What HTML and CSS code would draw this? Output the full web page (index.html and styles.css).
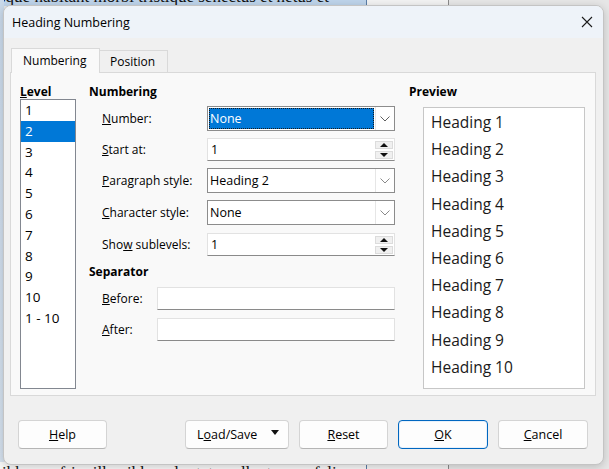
FILE: index.html
```html
<!DOCTYPE html>
<html>
<head>
<meta charset="utf-8">
<link rel="stylesheet" href="styles.css">
</head>
<body>
<div class="desktop">
  <div class="doc doc-top"><span class="doc-text">sque habitant morbi tristique senectus et netus et</span></div>
  <div class="doc doc-top-right"></div>
  <div class="doc doc-left"></div>
  <div class="doc doc-bottom"><span class="doc-text">ibh sem fringilla nibh, vulputate pellentesque felis</span></div>
  <div class="doc doc-bottom-right"></div>

  <div class="dialog">
    <div class="titlebar">
      <span class="title">Heading Numbering</span>
      <svg class="close" width="12" height="12" viewBox="0 0 12 12"><path d="M1 1 L11 11 M11 1 L1 11" stroke="#1c1c1c" stroke-width="1.1" fill="none"/></svg>
    </div>
    <div class="body">
      <div class="tabs">
        <div class="tab active">Numbering</div>
        <div class="tab">Position</div>
      </div>
      <div class="panel">
        <div class="col level-col">
          <div class="heading"><u>L</u>evel</div>
          <ul class="levels">
            <li>1</li><li class="sel">2</li><li>3</li><li>4</li><li>5</li><li>6</li><li>7</li><li>8</li><li>9</li><li>10</li><li>1 - 10</li>
          </ul>
        </div>
        <div class="col num-col">
          <div class="heading">Numbering</div>
          <div class="form">
            <div class="row r25"><label><u>N</u>umber:</label>
              <div class="combo focus"><span class="val"><span class="selbox">None</span></span><span class="drop"><svg width="10" height="6" viewBox="0 0 10 6"><path d="M0.5 0.5 L5 5 L9.5 0.5" stroke="#5f5f5f" fill="none"/></svg></span></div>
            </div>
            <div class="row r23"><label><u>S</u>tart at:</label>
              <div class="spin"><span class="val">1</span><span class="spinbtns"><span class="sb"><i class="up"></i></span><span class="sb"><i class="down"></i></span></span></div>
            </div>
            <div class="row r25"><label><u>P</u>aragraph style:</label>
              <div class="combo"><span class="val">Heading 2</span><span class="drop"><svg width="10" height="6" viewBox="0 0 10 6"><path d="M0.5 0.5 L5 5 L9.5 0.5" stroke="#8a8a8a" fill="none"/></svg></span></div>
            </div>
            <div class="row r25"><label><u>C</u>haracter style:</label>
              <div class="combo"><span class="val">None</span><span class="drop"><svg width="10" height="6" viewBox="0 0 10 6"><path d="M0.5 0.5 L5 5 L9.5 0.5" stroke="#8a8a8a" fill="none"/></svg></span></div>
            </div>
            <div class="row r23 gap8"><label>Sho<u>w</u> sublevels:</label>
              <div class="spin"><span class="val">1</span><span class="spinbtns"><span class="sb"><i class="up"></i></span><span class="sb"><i class="down"></i></span></span></div>
            </div>
          </div>
          <div class="heading sep">Separator</div>
          <div class="form sepform">
            <div class="row r23"><label class="short"><u>B</u>efore:</label><div class="entry"></div></div>
            <div class="row r23 gap8"><label class="short"><u>A</u>fter:</label><div class="entry"></div></div>
          </div>
        </div>
        <div class="col prev-col">
          <div class="heading">Preview</div>
          <div class="preview">
            <div>Heading 1</div><div>Heading 2</div><div>Heading 3</div><div>Heading 4</div><div>Heading 5</div>
            <div>Heading 6</div><div>Heading 7</div><div>Heading 8</div><div>Heading 9</div><div>Heading 10</div>
          </div>
        </div>
      </div>
      <div class="buttons">
        <button class="btn help"><u>H</u>elp</button>
        <div class="btn-group">
          <button class="btn loadsave">L<u>o</u>ad/Save <span class="caret"></span></button>
          <button class="btn reset"><u>R</u>eset</button>
          <button class="btn ok"><u>O</u>K</button>
          <button class="btn cancel"><u>C</u>ancel</button>
        </div>
      </div>
    </div>
  </div>
</div>
</body>
</html>
```
FILE: styles.css
```css
* { box-sizing: border-box; }
html, body { margin: 0; padding: 0; }
body {
  font-family: "Open Sans", "Noto Sans", sans-serif;
  font-size: 12px;
  color: #000;
  background: #e4e4e4;
}
.desktop {
  position: relative;
  width: 609px;
  height: 469px;
  overflow: hidden;
  background: #e6e6e6;
}
.doc { position: absolute; overflow: hidden; }
.doc-text {
  font-family: "Liberation Serif", serif;
  font-size: 17px;
  white-space: nowrap;
  color: #111;
}
.doc-top {
  left: 0; top: 0; width: 367px; height: 6px;
  background: #bdd3ea;
  border-right: 1px solid #5a7da6;
}
.doc-top .doc-text { position: absolute; left: -1px; top: -13px; }
.doc-top-right {
  left: 367px; top: 0; width: 82px; height: 6px;
  background: #f2f2f2;
  border-right: 1px solid #8a8a8a;
}
.doc-left {
  left: 0; top: 0; width: 4px; height: 469px;
  background: linear-gradient(#c9d9ea, #d5e1ee);
}
.doc-bottom {
  left: 0; top: 462px; width: 367px; height: 7px;
  background: #f7f7f7;
  border-right: 1px solid #5a7da6;
}
.doc-bottom .doc-text { position: absolute; left: 2px; top: 1px; }
.doc-bottom-right {
  left: 367px; top: 462px; width: 82px; height: 7px;
  background: #f2f2f2;
  border-right: 1px solid #8a8a8a;
}

.dialog {
  position: absolute;
  left: 3px; top: 5px;
  width: 601px; height: 460px;
  background: #f0f0f0;
  border: 1px solid #c4c4c4;
  border-radius: 8px;
  box-shadow: 0 2px 8px rgba(0,0,0,0.18);
  overflow: hidden;
  display: flex;
  flex-direction: column;
}
.titlebar {
  height: 32px;
  flex: none;
  background: #eef3f9;
  display: flex;
  align-items: center;
  justify-content: space-between;
  padding: 0 10px 0 8px;
}
.title { font-size: 12.5px; }
.close { margin-right: 0; }

.body {
  flex: 1;
  display: flex;
  flex-direction: column;
  padding: 10px 7px 0 6px;
}
.tabs { display: flex; align-items: flex-end; height: 24px; padding-left: 1px; }
.tab {
  height: 22px;
  padding: 0 10px;
  line-height: 21px;
  border: 1px solid #d9d9d9;
  border-bottom: none;
  background: #f0f0f0;
  margin-bottom: 0;
}
.tab.active {
  height: 25px;
  width: 89px;
  padding: 0 0 0 11px;
  line-height: 24px;
  background: #f9f9f9;
  position: relative;
  top: 1px;
  z-index: 1;
}
.tab + .tab { border-left: none; width: 68px; padding-left: 10px; }

.panel {
  height: 324px;
  border: 1px solid #d9d9d9;
  background: #f9f9f9;
  display: flex;
  padding: 11px 9px 0 9px;
}
.col { display: flex; flex-direction: column; }
.heading {
  font-weight: bold;
  height: 15px;
  line-height: 15px;
}
.level-col { width: 56px; }
.levels {
  list-style: none;
  margin: 0;
  padding: 0;
  height: 290px;
  border: 1px solid #828790;
  background: #fff;
}
.levels li {
  height: 20.8px;
  line-height: 20.8px;
  padding-left: 4px;
  font-size: 13.5px;
}
.levels li.sel { background: #0078d7; color: #fff; }

.num-col { width: 306px; margin-left: 13px; }
.form { display: flex; flex-direction: column; gap: 7px; margin-top: 7px; padding-left: 13px; }
.row { display: flex; align-items: center; }
.row.gap8 { margin-top: 1px; }
.r25 { height: 25px; }
.r23 { height: 23px; }
.row label { width: 105px; flex: none; }
.row label.short { width: 55px; }

.combo {
  width: 188px; height: 25px;
  border: 1px solid #8c8c8c;
  background: #fff;
  display: flex;
  font-size: 12.5px;
}
.combo .val { flex: 1; display: flex; align-items: center; padding-left: 2px; }
.combo.focus .val { padding: 1px; }
.selbox {
  flex: 1; align-self: stretch;
  background: #0078d7; color: #fff;
  outline: 1px dotted #1a1a1a;
  outline-offset: -1px;
  display: flex; align-items: center; padding-left: 1px;
}
.drop {
  width: 19px; flex: none;
  display: flex; align-items: center; justify-content: center;
  border-left: 1px solid #e6e6e6;
  background: #fff;
}
.spin {
  width: 188px; height: 23px;
  border: 1px solid #e2e2e2;
  border-bottom-color: #8a8a8a;
  background: #fff;
  display: flex;
  font-size: 12.5px;
}
.spin .val { flex: 1; display: flex; align-items: center; padding-left: 3px; }
.spinbtns { width: 18px; margin: 1px 1px 1px 0; display: flex; flex-direction: column; gap: 2px; justify-content: center; }
.sb {
  height: 8px;
  background: #f0f0f0;
  border: 1px solid #dcdcdc;
  display: flex; align-items: center; justify-content: center;
}
.sb i { display: block; width: 0; height: 0; border-left: 4px solid transparent; border-right: 4px solid transparent; }
.sb i.up { border-bottom: 4px solid #111; }
.sb i.down { border-top: 4px solid #111; }

.heading.sep { margin-top: 8px; height: 16px; line-height: 16px; }
.sepform { margin-top: 7px; }
.entry {
  width: 238px; height: 23px;
  border: 1px solid #e2e2e2;
  border-bottom-color: #8a8a8a;
  background: #fff;
}

.prev-col { margin-left: 14px; width: 176px; }
.preview {
  margin-top: 8px;
  margin-left: 14px;
  width: 162px;
  height: 282px;
  border: 1px solid #c7c7c7;
  background: #fff;
  padding: 1px 0 0 7px;
  font-size: 15.5px;
  color: #1a1a1a;
}
.preview div { height: 27.2px; line-height: 27.2px; }

.buttons {
  display: flex;
  align-items: center;
  margin-top: 24px;
  padding: 0 8px 0 8px;
}
.btn-group { display: flex; gap: 10px; margin-left: auto; }
.btn {
  font-family: "Open Sans", "Noto Sans", sans-serif;
  font-size: 12.5px;
  height: 29px;
  background: #fdfdfd;
  border: 1px solid #d4d4d4;
  border-bottom-color: #b5b5b5;
  border-radius: 4px;
  color: #000;
  padding: 0;
  display: flex; align-items: center; justify-content: center;
}
.help { width: 89px; }
.loadsave { width: 104px; justify-content: flex-start; padding-left: 11px; }
.caret {
  display: inline-block; width: 0; height: 0;
  border-left: 4.5px solid transparent; border-right: 4.5px solid transparent;
  border-top: 5px solid #111;
  margin-left: 14px; position: relative; top: -2px;
}
.reset { width: 89px; }
.ok { width: 90px; border: 1px solid #0067c0; box-shadow: inset 0 0 0 1px #e8f1fb; }
.cancel { width: 90px; }
```
